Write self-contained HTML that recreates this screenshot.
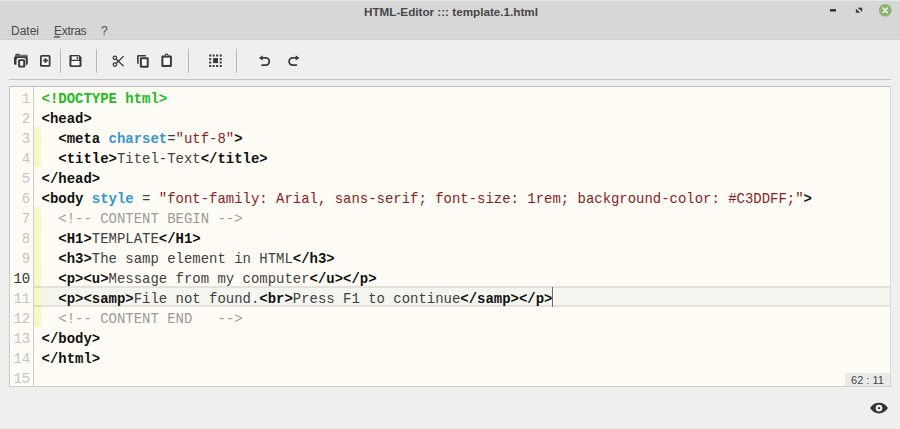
<!DOCTYPE html>
<html><head><meta charset="utf-8">
<style>
*{margin:0;padding:0;box-sizing:border-box}
html,body{width:900px;height:429px;overflow:hidden;background:#efefef;font-family:"Liberation Sans",sans-serif;position:relative}
.abs{position:absolute}
#title{left:0;top:0;width:900px;height:40px;background:#d7d7d7;border-top:1px solid #e6e6e6;border-bottom:1px solid #d0d0d0}
#ttl{left:1px;top:5px;width:900px;text-align:center;font-weight:bold;font-size:11.7px;color:#474747}
.menu{top:24px;font-size:12px;color:#4a4a4a}
.ul{left:54px;top:36px;width:6px;height:2px;background:#7a7a7a}
#menuline{left:0;top:38px;width:900px;height:1px;background:#e6e6e6}
.sep{top:49px;width:1px;height:24px;background:#b9b9b9}
#tbline{left:9px;top:79px;width:882px;height:1px;background:#c3c3c3}
#editor{left:9px;top:86px;width:882px;height:301px;background:#fefcf5;border:1px solid #c8c8c8;border-top-color:#bdbdbd;border-bottom-color:#d2d2d2;border-right-color:#d9d9d9}
#gutline{left:33px;top:87px;width:1px;height:299px;background:#cfcfcf}
.ln{left:10px;width:20.2px;text-align:right;font-family:"Liberation Mono",monospace;font-size:13.96px;color:#c4c4c4;line-height:20px}
.code{left:41.6px;font-family:"Liberation Mono",monospace;font-size:13.96px;line-height:20px;white-space:pre;color:#3f3f3f}
.b{font-weight:bold;color:#111}
.g{font-weight:bold;color:#20bd20}
.at{font-weight:bold;color:#3597cf}
.v{color:#8c1b1b}
.c{color:#9a9a9a}
.mark{left:34px;width:7px;background:#f7f7c4}
#curline{left:41px;top:288px;width:849px;height:17px;background:#f5f5f0}
.hb{left:34px;width:856px;height:2px;background:rgba(40,40,20,0.12)}
#cursor{left:552px;top:287px;width:1px;height:20px;background:#6a6a6a}
#status{left:845px;top:373px;width:45px;height:13px;background:#eaeae8;font-size:11px;color:#444;text-align:center;line-height:15px}
</style></head><body>
<div id="title" class="abs"></div>
<div id="ttl" class="abs">HTML-Editor ::: template.1.html</div>
<svg class="abs" style="left:820px;top:0" width="80" height="24" viewBox="820 0 80 24">
<rect x="830" y="9" width="6" height="2.4" rx="0.5" fill="#333"/>
<path d="M858.4 7.9h3.5v3.5z" fill="#333" stroke="#333" stroke-width="0.5" stroke-linejoin="round"/>
<path d="M856.2 9.1v3.4h3.4z" fill="#333" stroke="#333" stroke-width="0.5" stroke-linejoin="round"/>
<circle cx="885.2" cy="10.3" r="6.3" fill="#8ab56d"/>
<path d="M883 8.1l4.4 4.4M887.4 8.1l-4.4 4.4" stroke="#fff" stroke-width="1.4" stroke-linecap="round"/>
</svg>
<svg class="abs" style="left:860px;top:395px" width="40" height="30" viewBox="860 395 40 30">
<path d="M870 408.1c2.2-3.6 5.4-5.4 9-5.4s6.8 1.8 9 5.4c-2.2 3.6-5.4 5.4-9 5.4s-6.8-1.8-9-5.4z" fill="#333"/>
<circle cx="879" cy="408.1" r="3.4" fill="#efefef"/>
<circle cx="879" cy="408.1" r="1.2" fill="#333"/>
</svg>
<div class="abs menu" style="left:11px">Datei</div>
<div class="abs menu" style="left:54px;letter-spacing:-0.3px">Extras</div>
<div class="abs menu" style="left:101px">?</div>
<div class="abs ul"></div>

<div class="abs sep" style="left:60px"></div>
<div class="abs sep" style="left:96px"></div>
<div class="abs sep" style="left:188px"></div>
<div class="abs sep" style="left:236px"></div>
<svg class="abs" style="left:0;top:40px" width="320" height="38" viewBox="0 40 320 38">
<g fill="#3a3a3a">
<!-- open folder -->
<rect x="15.4" y="53.7" width="4.4" height="2" rx="0.8"/>
<rect x="15" y="54.8" width="12.6" height="2.2" fill="#6e6e6e" rx="0.6"/>
<rect x="14" y="56.6" width="13.8" height="8.1" rx="1.2"/>
<rect x="16.5" y="58.1" width="9.5" height="10.6" rx="2" fill="#efefef"/>
<rect x="18.1" y="59.2" width="7.3" height="8.3" rx="1.6"/>
<rect x="20.1" y="61.1" width="3.1" height="4.5" fill="#fff"/>
<!-- new -->
<rect x="40" y="54.9" width="10.5" height="11.9" rx="1.5"/>
<rect x="41.8" y="56.7" width="6.9" height="8.3" fill="#fff"/>
<rect x="43.1" y="59.6" width="4.8" height="1.8"/>
<rect x="44.6" y="58.1" width="1.8" height="4.8"/>
<!-- save -->
<path d="M69.4 56.2a1.3 1.3 0 0 1 1.3-1.3h8.4l2.4 2.4v8.3a1.3 1.3 0 0 1-1.3 1.3h-9.5a1.3 1.3 0 0 1-1.3-1.3z"/>
<rect x="71.7" y="56.4" width="7.1" height="3.3" fill="#fff"/>
<rect x="76.6" y="57.0" width="1.4" height="1.9"/>
<rect x="71.4" y="61" width="8.1" height="4.3" fill="#fff"/>
<!-- cut -->
<g fill="none" stroke="#3a3a3a" stroke-width="1.25">
<circle cx="114.9" cy="57.8" r="1.75"/>
<circle cx="114.9" cy="64.6" r="1.75"/>
<path d="M116.3 59.2L123.6 66.3M116.3 63.2L123.6 56.3"/>
</g>
<!-- copy -->
<path d="M137.1 55.9a1 1 0 0 1 1-1h7.7v1.6h-7.1v7.3h-1.6z"/>
<rect x="139.9" y="57.2" width="8.8" height="10.5" rx="1.4"/>
<rect x="141.9" y="59.2" width="4.8" height="6.5" fill="#fff"/>
<!-- paste -->
<rect x="161.4" y="55.6" width="10.5" height="11.3" rx="1.2"/>
<rect x="163.4" y="57.6" width="6.5" height="7.3" fill="#fff"/>
<circle cx="166.6" cy="55.5" r="2"/>
<circle cx="166.6" cy="55.6" r="0.8" fill="#fff"/>
<!-- select all -->
<rect x="213.1" y="58.1" width="4.9" height="5"/>
<rect x="209.2" y="54.5" width="2" height="2"/>
<rect x="212.6" y="54.5" width="2" height="2"/>
<rect x="216.1" y="54.5" width="2" height="2"/>
<rect x="219.7" y="54.5" width="2" height="2"/>
<rect x="209.2" y="58.1" width="2" height="2"/>
<rect x="219.7" y="58.1" width="2" height="2"/>
<rect x="209.2" y="61.5" width="2" height="2"/>
<rect x="219.7" y="61.5" width="2" height="2"/>
<rect x="209.2" y="65.0" width="2" height="2"/>
<rect x="212.6" y="65.0" width="2" height="2"/>
<rect x="216.1" y="65.0" width="2" height="2"/>
<rect x="219.7" y="65.0" width="2" height="2"/>
</g>
<g fill="none" stroke="#3a3a3a" stroke-width="1.8">
<path d="M261.5 57.9h4.2a3.6 3.6 0 0 1 0 7.2h-4.3"/>
<path d="M296.9 57.9h-4.2a3.6 3.6 0 0 0 0 7.2h4.3"/>
</g>
<g fill="#3a3a3a">
<path d="M258.9 57.9l3.8-2.6v5.2z"/>
<path d="M299.5 57.9l-3.8-2.6v5.2z"/>
</g>
</svg>
<div id="tbline" class="abs"></div>

<div id="editor" class="abs"></div>
<div id="curline" class="abs"></div>
<div class="abs mark" style="top:127px;height:40px"></div>
<div class="abs mark" style="top:207px;height:120px"></div>
<div class="abs hb" style="top:286px"></div><div class="abs hb" style="top:305px"></div>
<div id="gutline" class="abs"></div>

<div class="abs ln" style="top:89px;white-space:pre">1
2
3
4
5
6
7
8
9
<span style="color:#333">10</span>
11
12
13
14
15</div>
<div class="abs code" style="top:89px"><span class="g">&lt;!DOCTYPE html&gt;</span>
<span class="b">&lt;head&gt;</span>
  <span class="b">&lt;meta </span><span class="at">charset</span>=<span class="v">&quot;utf-8&quot;</span><span class="b">&gt;</span>
  <span class="b">&lt;title&gt;</span>Titel-Text<span class="b">&lt;/title&gt;</span>
<span class="b">&lt;/head&gt;</span>
<span class="b">&lt;body </span><span class="at">style</span> = <span class="v">&quot;font-family: Arial, sans-serif; font-size: 1rem; background-color: #C3DDFF;&quot;</span><span class="b">&gt;</span>
  <span class="c">&lt;!-- CONTENT BEGIN --&gt;</span>
  <span class="b">&lt;H1&gt;</span>TEMPLATE<span class="b">&lt;/H1&gt;</span>
  <span class="b">&lt;h3&gt;</span>The samp element in HTML<span class="b">&lt;/h3&gt;</span>
  <span class="b">&lt;p&gt;&lt;u&gt;</span>Message from my computer<span class="b">&lt;/u&gt;&lt;/p&gt;</span>
  <span class="b">&lt;p&gt;&lt;samp&gt;</span>File not found.<span class="b">&lt;br&gt;</span>Press F1 to continue<span class="b">&lt;/samp&gt;&lt;/p&gt;</span>
  <span class="c">&lt;!-- CONTENT END   --&gt;</span>
<span class="b">&lt;/body&gt;</span>
<span class="b">&lt;/html&gt;</span></div>
<div id="cursor" class="abs"></div>
<div id="status" class="abs">62 : 11</div>
</body></html>
